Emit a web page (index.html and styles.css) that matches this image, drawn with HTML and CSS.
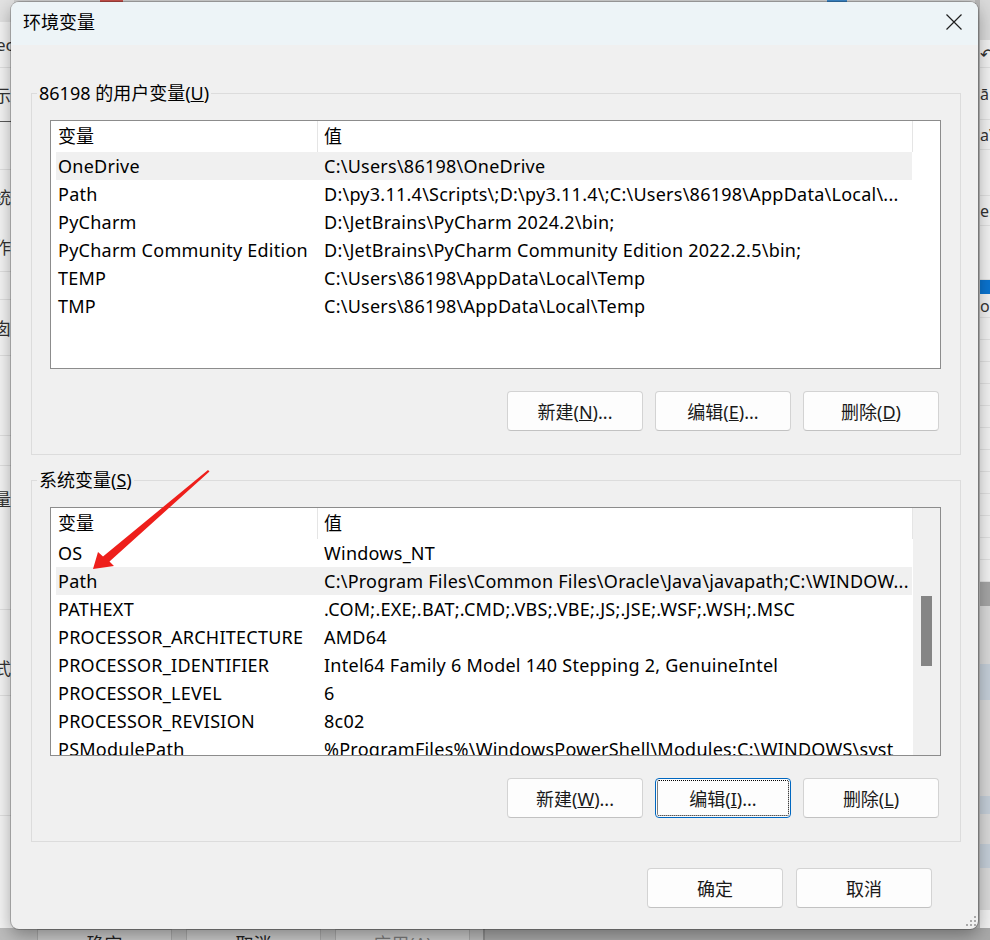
FILE: index.html
```html
<!DOCTYPE html>
<html lang="zh-CN">
<head>
<meta charset="utf-8">
<title>环境变量</title>
<link rel="stylesheet" href="styles.css">
</head>
<body>
<div class="desk">
  <div class="bg-top"><span class="bt-red"></span><span class="bt-blue"></span></div>

  <div class="bg-left">
    <div class="bl h22 shade"></div>
    <div class="bl h46 line"><span class="frag fl">ec</span></div>
    <div class="bl h54 dark"><span class="frag fc">示</span></div>
    <div class="bl h48 line"></div>
    <div class="bl h52"><span class="frag fc">统</span></div>
    <div class="bl h50 line"><span class="frag fc">作</span></div>
    <div class="bl h28 line"></div>
    <div class="bl h56 line"><span class="frag fc">囱</span></div>
    <div class="bl h80 line"></div>
    <div class="bl h30 line"></div>
    <div class="bl h64"><span class="frag fc">量</span></div>
    <div class="bl h80 line"></div>
    <div class="bl h30"></div>
    <div class="bl h56 line"><span class="frag fc">式</span></div>
    <div class="bl h120 line"></div>
    <div class="bl h110"></div>
  </div>

  <div class="bg-right">
    <div class="br h40 gray"></div>
    <div class="br h28 line"><span class="frag fr">↶</span></div>
    <div class="br h52 line"><span class="frag fr">ā</span></div>
    <div class="br h30 line"><span class="frag fr">a\j</span></div>
    <div class="br h46 line"></div>
    <div class="br h30 line"><span class="frag fr">erS</span></div>
    <div class="br h54 line"></div>
    <div class="br h14 blue"></div>
    <div class="br h24 line"><span class="frag fr">oc</span></div>
    <div class="br h22 line"></div>
    <div class="br h22 line"></div>
    <div class="br h22 line"></div>
    <div class="br h22 line"></div>
    <div class="br h22 line"></div>
    <div class="br h22 line"></div>
    <div class="br h22 line"></div>
    <div class="br h22 line"></div>
    <div class="br h22 line"></div>
    <div class="br h22 line"></div>
    <div class="br h22 line"></div>
    <div class="br h22 line"></div>
    <div class="br h24 darkband"></div>
    <div class="br h58 mid"></div>
    <div class="br h36 bluegray"></div>
    <div class="br h96 mid"></div>
    <div class="br h18 bluegray"></div>
    <div class="br h30 mid"></div>
    <div class="br h24 bluegray"></div>
    <div class="br h42 mid"></div>
  </div>

  <div class="bg-bottom">
    <span class="bb">确定</span>
    <span class="bb">取消</span>
    <span class="bb dis">应用(A)</span>
    <span class="bb-edge"></span>
  </div>

  <div class="dialog">
    <div class="titlebar">
      <span class="title">环境变量</span>
      <svg class="close" width="16" height="16" viewBox="0 0 16 16"><path d="M0.5 0.5 L15.5 15.5 M15.5 0.5 L0.5 15.5" stroke="#1f1f1f" stroke-width="1.2" fill="none"/></svg>
    </div>
    <div class="dbody">
      <div class="group g1">
        <div class="glabel">86198 的用户变量(<u>U</u>)</div>
        <div class="list">
          <div class="lmain">
            <div class="lhead"><div class="hc hc1">变量</div><div class="hc hc2">值</div></div>
            <div class="row sel"><div class="c1">OneDrive</div><div class="c2">C:\Users\86198\OneDrive</div></div>
            <div class="row"><div class="c1">Path</div><div class="c2">D:\py3.11.4\Scripts\;D:\py3.11.4\;C:\Users\86198\AppData\Local\...</div></div>
            <div class="row"><div class="c1">PyCharm</div><div class="c2">D:\JetBrains\PyCharm 2024.2\bin;</div></div>
            <div class="row"><div class="c1">PyCharm Community Edition</div><div class="c2">D:\JetBrains\PyCharm Community Edition 2022.2.5\bin;</div></div>
            <div class="row"><div class="c1">TEMP</div><div class="c2">C:\Users\86198\AppData\Local\Temp</div></div>
            <div class="row"><div class="c1">TMP</div><div class="c2">C:\Users\86198\AppData\Local\Temp</div></div>
          </div>
        </div>
        <div class="btnrow">
          <button class="btn">新建(<u>N</u>)...</button>
          <button class="btn">编辑(<u>E</u>)...</button>
          <button class="btn">删除(<u>D</u>)</button>
        </div>
      </div>

      <div class="group g2">
        <div class="glabel">系统变量(<u>S</u>)</div>
        <div class="list">
          <div class="lmain">
            <div class="lhead"><div class="hc hc1">变量</div><div class="hc hc2">值</div></div>
            <div class="row"><div class="c1">OS</div><div class="c2">Windows_NT</div></div>
            <div class="row sel"><div class="c1">Path</div><div class="c2">C:\Program Files\Common Files\Oracle\Java\javapath;C:\WINDOW...</div></div>
            <div class="row"><div class="c1">PATHEXT</div><div class="c2">.COM;.EXE;.BAT;.CMD;.VBS;.VBE;.JS;.JSE;.WSF;.WSH;.MSC</div></div>
            <div class="row"><div class="c1">PROCESSOR_ARCHITECTURE</div><div class="c2">AMD64</div></div>
            <div class="row"><div class="c1">PROCESSOR_IDENTIFIER</div><div class="c2">Intel64 Family 6 Model 140 Stepping 2, GenuineIntel</div></div>
            <div class="row"><div class="c1">PROCESSOR_LEVEL</div><div class="c2">6</div></div>
            <div class="row"><div class="c1">PROCESSOR_REVISION</div><div class="c2">8c02</div></div>
            <div class="row"><div class="c1">PSModulePath</div><div class="c2">%ProgramFiles%\WindowsPowerShell\Modules;C:\WINDOWS\syst</div></div>
          </div>
          <div class="sb"><div class="thumb"></div></div>
        </div>
        <div class="btnrow">
          <button class="btn">新建(<u>W</u>)...</button>
          <button class="btn focus">编辑(<u>I</u>)...</button>
          <button class="btn">删除(<u>L</u>)</button>
        </div>
      </div>

      <div class="dlgbtns">
        <button class="btn">确定</button>
        <button class="btn">取消</button>
      </div>
    </div>
    <svg class="grip" width="12" height="12" viewBox="0 0 12 12">
      <rect x="9" y="1" width="2" height="2" fill="#a9a9a9"/>
      <rect x="5" y="5" width="2" height="2" fill="#a9a9a9"/>
      <rect x="9" y="5" width="2" height="2" fill="#a9a9a9"/>
      <rect x="1" y="9" width="2" height="2" fill="#a9a9a9"/>
      <rect x="5" y="9" width="2" height="2" fill="#a9a9a9"/>
      <rect x="9" y="9" width="2" height="2" fill="#a9a9a9"/>
    </svg>
  </div>

  <svg class="arrow" width="990" height="940" viewBox="0 0 990 940">
    <polygon points="208,470 209.5,471.5 109.5,561.5 114,566 93,569 98,552 103,556.5" fill="#ee1f1b"/>
  </svg>
</div>
</body>
</html>
```

FILE: styles.css
```css
* { box-sizing: border-box; }
html, body { margin: 0; padding: 0; }
body {
  width: 990px;
  height: 940px;
  overflow: hidden;
  font-family: "Noto Sans", "Noto Sans CJK SC", sans-serif;
  font-size: 18px;
  color: #000;
  background: #d2d2d2;
}
.desk { position: relative; width: 990px; height: 940px; overflow: hidden; }

/* background windows */
.bg-top { position: absolute; left: 0; top: 0; width: 990px; height: 3px; display: flex; background: #cfcfcf; }
.bt-red { width: 23px; height: 2px; margin-left: 100px; background: #c9514a; }
.bt-blue { width: 20px; height: 2px; margin-left: 704px; background: #3b86c8; }

.bg-left { position: absolute; left: 0; top: 0; width: 14px; height: 929px; background: #f5f5f5; display: flex; flex-direction: column; overflow: hidden; }
.bg-right { position: absolute; left: 975px; top: 0; width: 15px; height: 929px; background: #f2f2f2; display: flex; flex-direction: column; overflow: hidden; border-left: 5px solid #b9b9b9; }
.bl, .br { flex: none; display: flex; align-items: center; overflow: hidden; }
.line { border-bottom: 1px solid #e0e0e0; }
.dark { border-bottom: 1px solid #5a5a5a; }
.shade { background: #e2e2e2; }
.gray { background: #dadada; }
.blue { background: #0a74d0; }
.darkband { background: #a5a5a5; }
.mid { background: #d9d9d9; }
.bluegray { background: #c4ced8; }
.frag { font-size: 17px; color: #333; white-space: nowrap; }
.fl { margin-left: -4px; }
.fc { margin-left: -6px; }
.fr { margin-left: 0; font-size: 16px; }
.h14 { height: 14px; } .h18 { height: 18px; } .h22 { height: 22px; } .h24 { height: 24px; }
.h28 { height: 28px; } .h30 { height: 30px; } .h36 { height: 36px; } .h40 { height: 40px; }
.h42 { height: 42px; } .h46 { height: 46px; } .h48 { height: 48px; } .h50 { height: 50px; }
.h52 { height: 52px; } .h54 { height: 54px; } .h56 { height: 56px; } .h58 { height: 58px; }
.h64 { height: 64px; } .h80 { height: 80px; } .h96 { height: 96px; } .h110 { height: 110px; }
.h120 { height: 120px; }

.bg-bottom { position: absolute; left: 0; top: 928px; width: 990px; height: 12px; background: #bdbdbd; display: flex; align-items: flex-start; overflow: hidden; padding-left: 37px; gap: 14px; }
.bb { flex: none; width: 135px; height: 30px; margin-top: 1px; background: #cacaca; border: 1px solid #a9a9a9; font-size: 18px; line-height: 28px; text-align: center; color: #222; }
.bb.dis { color: #7a7a7a; }
.bb-edge { flex: none; width: 507px; height: 12px; margin-left: -1px; background: #a9a9a9; border-left: 2px solid #8f8f8f; }

/* dialog */
.dialog {
  position: absolute; left: 11px; top: 2px; width: 967px; height: 927px;
  background: #f0f0f0; border-radius: 8px; overflow: hidden;
  box-shadow: 0 0 0 1px rgba(0,0,0,0.22), 0 6px 18px rgba(0,0,0,0.35);
}
.titlebar { height: 43px; background: #edf4f7; display: flex; align-items: center; justify-content: space-between; padding: 0 16px 3px 12px; }
.title { font-size: 18px; line-height: 24px; color: #000; }
.close { display: block; }

.dbody { padding: 0 17px 0 20px; }
.group { border: 1px solid #dcdcdc; padding: 0 19px 23px 18px; }
.g1 { margin-top: 48px; }
.g2 { margin-top: 25px; }
.glabel { width: fit-content; margin: -13px 0 0 -13px; padding: 0 2px; background: #f0f0f0; line-height: 24px; white-space: nowrap; }

.list { margin-top: 15px; height: 249px; border: 1px solid #8c8c8c; background: #fff; display: flex; overflow: hidden; }
.lmain { width: 862px; flex: none; overflow: hidden; }
.lhead { display: flex; height: 31px; }
.hc { height: 31px; line-height: 31px; border-right: 1px solid #e5e5e5; white-space: nowrap; }
.hc1 { width: 267px; padding-left: 7px; }
.hc2 { width: 595px; padding-left: 6px; }
.row { display: flex; height: 28px; line-height: 28px; margin-left: 5px; width: 856px; white-space: nowrap; letter-spacing: 0.25px; }
.row.sel { background: #f0f0f0; }
.c1 { width: 261px; flex: none; padding-left: 2px; overflow: hidden; }
.c2 { flex: 1; padding-left: 7px; overflow: hidden; }
.sb { width: 27px; flex: none; background: #f0f0f0; padding-top: 88px; }
.thumb { width: 11px; height: 70px; margin-left: 8px; background: #858585; }

.btnrow { display: flex; justify-content: flex-end; gap: 12px; margin-top: 22px; padding-right: 2px; }
.btn {
  width: 136px; height: 40px; padding: 0; margin: 0;
  font-family: inherit; font-size: 18px; color: #1a1a1a;
  background: #fdfdfd; border: 1px solid #d3d3d3; border-bottom-color: #c2c2c2; border-radius: 4px;
}
.btn.focus { border-color: #0067c0; outline: 1px dotted #000; outline-offset: -3px; }
.dlgbtns { display: flex; justify-content: flex-end; gap: 13px; margin-top: 26px; padding-right: 29px; }

.grip { position: absolute; right: 1px; bottom: 2px; }
.arrow { position: absolute; left: 0; top: 0; pointer-events: none; }
```
